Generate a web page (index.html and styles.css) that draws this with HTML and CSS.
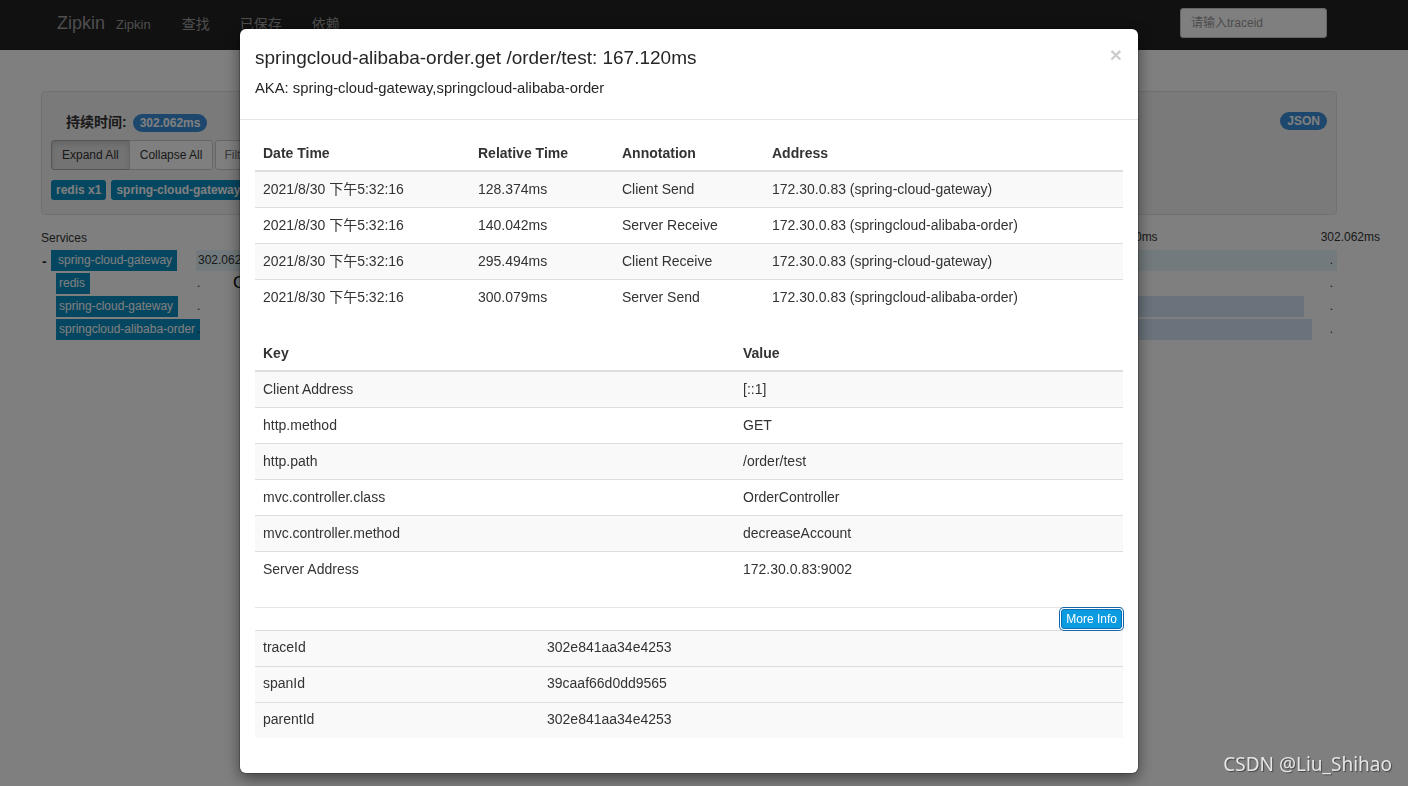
FILE: index.html
```html
<!DOCTYPE html>
<html lang="zh-CN">
<head>
    <meta charset="UTF-8">
    <title>Zipkin - Trace</title>
    <link rel="stylesheet" href="styles.css">
</head>
<body>
    <div class="page">
        <nav class="navbar">
            <div class="nav-left">
                <span class="brand">Zipkin</span>
                <span class="brand-sub">Zipkin</span>
                <a class="nav-link">查找</a>
                <a class="nav-link">已保存</a>
                <a class="nav-link">依赖</a>
            </div>
            <input class="trace-search" type="text" placeholder="请输入traceid">
        </nav>

        <main class="content">
            <section class="trace-panel">
                <div class="trace-head">
                    <div class="duration"><strong>持续时间:</strong><span class="badge">302.062ms</span></div>
                    <span class="badge">JSON</span>
                </div>
                <div class="controls">
                    <div class="btn-group">
                        <button class="btn active">Expand All</button>
                        <button class="btn">Collapse All</button>
                    </div>
                    <input class="filter" type="text" placeholder="Filter Service">
                </div>
                <div class="service-tags">
                    <span class="tag">redis x1</span>
                    <span class="tag">spring-cloud-gateway x2</span>
                </div>
            </section>

            <section class="timeline">
                <div class="timeline-head">
                    <div class="svc-col">Services</div>
                    <div class="ticks">
                        <span>241.650ms</span>
                        <span>302.062ms</span>
                    </div>
                </div>

                <div class="span-row">
                    <div class="svc-col root">
                        <span class="toggle">-</span>
                        <span class="svc-name">spring-cloud-gateway</span>
                    </div>
                    <div class="bar-col">
                        <div class="bar root-bar" style="margin-left: 0%; width: 100%;"><span class="bar-label">302.062ms</span></div>
                        <span class="end-dot">.</span>
                    </div>
                </div>

                <div class="span-row">
                    <div class="svc-col child">
                        <span class="svc-name">redis</span>
                    </div>
                    <div class="bar-col">
                        <span class="dot">.</span>
                        <span class="hover-text">C</span>
                        <div class="bar" style="margin-left: 11%; width: 2%;"></div>
                        <span class="end-dot">.</span>
                    </div>
                </div>

                <div class="span-row">
                    <div class="svc-col child">
                        <span class="svc-name">spring-cloud-gateway</span>
                    </div>
                    <div class="bar-col">
                        <span class="dot">.</span>
                        <div class="bar" style="margin-left: 42.5%; width: 54.6%;"></div>
                        <span class="end-dot">.</span>
                    </div>
                </div>

                <div class="span-row">
                    <div class="svc-col child">
                        <span class="svc-name">springcloud-alibaba-order</span>
                    </div>
                    <div class="bar-col">
                        <span class="dot">.</span>
                        <div class="bar" style="margin-left: 46.4%; width: 51.4%;"></div>
                        <span class="end-dot">.</span>
                    </div>
                </div>
            </section>
        </main>
    </div>

    <div class="backdrop"></div>

    <div class="modal">
        <div class="modal-header">
            <span class="close">&times;</span>
            <h4 class="modal-title">springcloud-alibaba-order.get /order/test: 167.120ms</h4>
            <h5 class="aka">AKA: spring-cloud-gateway,springcloud-alibaba-order</h5>
        </div>
        <div class="modal-body">
            <table class="table annotations">
                <thead>
                    <tr><th>Date Time</th><th>Relative Time</th><th>Annotation</th><th>Address</th></tr>
                </thead>
                <tbody>
                    <tr><td>2021/8/30 下午5:32:16</td><td>128.374ms</td><td>Client Send</td><td>172.30.0.83 (spring-cloud-gateway)</td></tr>
                    <tr><td>2021/8/30 下午5:32:16</td><td>140.042ms</td><td>Server Receive</td><td>172.30.0.83 (springcloud-alibaba-order)</td></tr>
                    <tr><td>2021/8/30 下午5:32:16</td><td>295.494ms</td><td>Client Receive</td><td>172.30.0.83 (spring-cloud-gateway)</td></tr>
                    <tr><td>2021/8/30 下午5:32:16</td><td>300.079ms</td><td>Server Send</td><td>172.30.0.83 (springcloud-alibaba-order)</td></tr>
                </tbody>
            </table>

            <table class="table tags">
                <thead>
                    <tr><th>Key</th><th>Value</th></tr>
                </thead>
                <tbody>
                    <tr><td>Client Address</td><td>[::1]</td></tr>
                    <tr><td>http.method</td><td>GET</td></tr>
                    <tr><td>http.path</td><td>/order/test</td></tr>
                    <tr><td>mvc.controller.class</td><td>OrderController</td></tr>
                    <tr><td>mvc.controller.method</td><td>decreaseAccount</td></tr>
                    <tr><td>Server Address</td><td>172.30.0.83:9002</td></tr>
                </tbody>
            </table>

            <div class="more-info">
                <button class="btn-info">More Info</button>
            </div>
            <table class="table ids">
                <tbody>
                    <tr><td>traceId</td><td>302e841aa34e4253</td></tr>
                    <tr><td>spanId</td><td>39caaf66d0dd9565</td></tr>
                    <tr><td>parentId</td><td>302e841aa34e4253</td></tr>
                </tbody>
            </table>
        </div>
    </div>

    <div class="watermark">CSDN @Liu_Shihao</div>
</body>
</html>
```

FILE: styles.css
```css
* {
    box-sizing: border-box;
}

body {
    margin: 0;
    font-family: "Liberation Sans", "Noto Sans CJK SC", sans-serif;
    font-size: 14px;
    color: #333;
    background: #fff;
}

/* navbar */
.navbar {
    height: 50px;
    background: #222;
    display: flex;
    align-items: center;
    justify-content: space-between;
    padding: 0 81px 0 57px;
}

.nav-left {
    display: flex;
    align-items: baseline;
    margin-top: -4px;
}

.brand {
    font-size: 18px;
    color: #9d9d9d;
}

.brand-sub {
    font-size: 13px;
    color: #9d9d9d;
    margin: 0 31px 0 11px;
}

.nav-link {
    color: #9d9d9d;
    margin-right: 30px;
}

.trace-search {
    width: 147px;
    height: 30px;
    margin-top: -4px;
    border: 1px solid #ccc;
    border-radius: 3px;
    padding: 5px 10px;
    font: 12px "Liberation Sans", "Noto Sans CJK SC", sans-serif;
    background: #fff;
}

.trace-search::placeholder {
    color: #999;
}

/* trace summary */
.content {
    padding: 41px 71px 0 41px;
}

.trace-panel {
    background: #f5f5f5;
    border: 1px solid #e3e3e3;
    border-radius: 4px;
    padding: 10px 9px 14px;
}

.trace-head {
    display: flex;
    justify-content: space-between;
    align-items: center;
    height: 20px;
    margin: 9px 0 9px;
    padding-left: 15px;
}

.duration strong {
    margin-right: 6px;
}

.badge {
    display: inline-block;
    background: #3b8fd9;
    color: #fff;
    font-size: 12px;
    font-weight: bold;
    line-height: 18px;
    padding: 0 7px;
    border-radius: 10px;
}

.controls {
    display: flex;
    gap: 2px;
}

.btn-group {
    display: flex;
}

.btn {
    height: 30px;
    padding: 5px 10px;
    font: 12px "Liberation Sans", sans-serif;
    color: #333;
    background: #fff;
    border: 1px solid #ccc;
}

.btn:first-child {
    border-radius: 3px 0 0 3px;
}

.btn:last-child {
    border-radius: 0 3px 3px 0;
    margin-left: -1px;
}

.btn.active {
    background: #e6e6e6;
    border-color: #adadad;
    box-shadow: inset 0 3px 5px rgba(0, 0, 0, .125);
}

.filter {
    width: 200px;
    height: 30px;
    border: 1px solid #ccc;
    border-radius: 3px;
    padding: 5px 8px;
    font: 12px "Liberation Sans", sans-serif;
}

.service-tags {
    display: flex;
    gap: 5px;
    margin-top: 10px;
}

.tag {
    background: #0a8cc0;
    color: #fff;
    font-size: 12px;
    font-weight: bold;
    line-height: 20px;
    padding: 0 5px;
    border-radius: 3px;
}

/* timeline */
.timeline {
    margin-top: 15px;
    font-size: 12px;
}

.timeline-head {
    display: flex;
    height: 15px;
    margin-bottom: 5px;
}

.svc-col {
    width: 155px;
    flex-shrink: 0;
    display: flex;
    align-items: center;
}

.ticks {
    flex: 1;
    display: flex;
    justify-content: flex-end;
    gap: 163px;
    margin-right: -43px;
}

.span-row {
    display: flex;
    height: 21px;
    margin-bottom: 2px;
}

.svc-col.root {
    padding-left: 1px;
}

.svc-col.child {
    padding-left: 15px;
}

.toggle {
    width: 9px;
    font-weight: bold;
    font-size: 14px;
}

.svc-name {
    background: #0a8cc0;
    color: #fff;
    line-height: 21px;
    padding: 0 5px 0 3px;
    white-space: nowrap;
}

.svc-col.root .svc-name {
    padding-left: 7px;
    padding-right: 5px;
}

.bar-col {
    flex: 1;
    position: relative;
    display: flex;
}

.bar {
    height: 21px;
    background: #d4e6f6;
}

.root-bar {
    background: #e6f5fa;
    padding-left: 2px;
}

.bar-label {
    line-height: 21px;
}

.dot {
    position: absolute;
    left: 1px;
    top: 3px;
}

.end-dot {
    position: absolute;
    right: 4px;
    top: 3px;
}

.hover-text {
    position: absolute;
    left: 37px;
    top: 0;
    font-size: 17px;
    color: #000;
}

/* modal */
.backdrop {
    position: fixed;
    inset: 0;
    background: rgba(0, 0, 0, .5);
}

.modal {
    position: fixed;
    top: 29px;
    left: 240px;
    width: 898px;
    background: #fff;
    border-radius: 6px;
    box-shadow: 0 0 0 1px rgba(0, 0, 0, .2), 0 5px 15px rgba(0, 0, 0, .5);
}

.modal-header {
    padding: 16px 15px 15px;
    border-bottom: 1px solid #e5e5e5;
}

.close {
    float: right;
    font-size: 21px;
    font-weight: bold;
    line-height: 1;
    color: #000;
    opacity: .2;
    margin: -1px 1px 0 0;
}

.modal-title {
    margin: 0;
    font-size: 19px;
    font-weight: 500;
    line-height: 26px;
    color: #262626;
}

.aka {
    margin: 7px 0 6px;
    font-size: 14.8px;
    font-weight: 500;
    line-height: 20px;
    color: #262626;
}

.modal-body {
    padding: 15px;
}

.table {
    width: 100%;
    border-collapse: collapse;
    margin-bottom: 20px;
}

.table th,
.table td {
    text-align: left;
    padding: 8px;
    line-height: 19px;
    vertical-align: top;
}

.table th {
    padding-top: 9px;
    padding-bottom: 7px;
    border-bottom: 2px solid #ddd;
}

.table td {
    border-top: 1px solid #ddd;
}

.table tbody tr:nth-child(odd) {
    background: #f9f9f9;
}

.annotations th:nth-child(1) { width: 215px; }
.annotations th:nth-child(2) { width: 144px; }
.annotations th:nth-child(3) { width: 150px; }

.tags th:first-child { width: 480px; }

.ids td:first-child { width: 284px; }

.ids tbody tr {
    background: #f9f9f9;
}

.ids td {
    padding-top: 7px;
    padding-bottom: 9px;
}

.more-info {
    border-top: 1px solid #e5e5e5;
    display: flex;
    justify-content: flex-end;
    padding: 1px 1px 1px 0;
}

.btn-info {
    height: 20px;
    padding: 0 4px;
    font: 12px "Liberation Sans", sans-serif;
    color: #fff;
    background: #0a9be0;
    border: 1px solid #0b6fb8;
    border-radius: 3px;
    box-shadow: 0 0 0 1px #fff, 0 0 0 2px #1565a8;
}

/* watermark */
.watermark {
    position: fixed;
    right: 16px;
    bottom: 9px;
    font-family: "Noto Sans", sans-serif;
    font-size: 19px;
    color: #e6e6e6;
    text-shadow: 1px 1px 1px rgba(0, 0, 0, .45);
}
```
